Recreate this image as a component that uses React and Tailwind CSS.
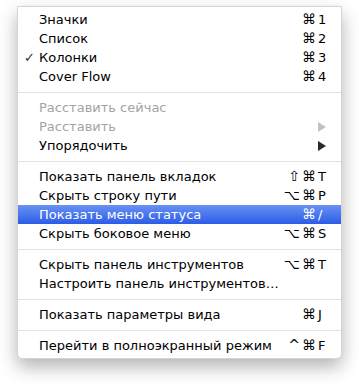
import React from "react";

const font = { fontFamily: '"DejaVu Sans", "Lucida Grande", sans-serif' };

function Shortcut({ mods, k, light }) {
  return (
    <span className={`flex items-center ${light ? "text-white" : "text-black"}`}>
      {mods.split("").map((m, i) => (
        <span key={i} className="text-[14px] mr-[2px]">
          {m}
        </span>
      ))}
      <span className="w-[9px] text-left">{k}</span>
    </span>
  );
}

function Arrow({ disabled }) {
  return (
    <svg width="8" height="10" viewBox="0 0 8 10" className="mr-[1px]">
      <path d="M0 0 L8 5 L0 10 Z" fill={disabled ? "#c2c2c2" : "#2a2a2a"} />
    </svg>
  );
}

function Item({ label, mods, k, checked, disabled, arrow, active }) {
  const base = active
    ? "bg-gradient-to-b from-[#6a90f2] to-[#2b5ce7] text-white"
    : disabled
    ? "text-[#a3a3a3]"
    : "text-black";
  return (
    <div className={`flex items-center h-[19px] pl-[6px] pr-[14px] ${base}`}>
      <span className="w-[15px] text-[13px] font-bold leading-none text-[#333]">{checked ? "✓" : ""}</span>
      <span className="flex-1 whitespace-nowrap">{label}</span>
      {arrow && <Arrow disabled={disabled} />}
      {k && <Shortcut mods={mods} k={k} light={active} />}
    </div>
  );
}

function Sep() {
  return (
    <div className="h-[12px] flex items-center">
      <div className="w-full h-px bg-[#e2e2e2]" />
    </div>
  );
}

export default function App() {
  return (
    <div className="w-[359px] h-[387px] bg-white pl-[17px] pt-[6px]" style={font}>
      <div className="w-[325px] bg-white border border-[#d4d4d4] rounded-b-[5px] shadow-[0_8px_18px_rgba(0,0,0,0.3)] py-[3px] text-[13px] leading-[19px]">
        <Item label="Значки" mods="⌘" k="1" />
        <Item label="Список" mods="⌘" k="2" />
        <Item label="Колонки" mods="⌘" k="3" checked />
        <Item label="Cover Flow" mods="⌘" k="4" />
        <Sep />
        <Item label="Расставить сейчас" disabled />
        <Item label="Расставить" disabled arrow />
        <Item label="Упорядочить" arrow />
        <Sep />
        <Item label="Показать панель вкладок" mods="⇧⌘" k="T" />
        <Item label="Скрыть строку пути" mods="⌥⌘" k="P" />
        <Item label="Показать меню статуса" mods="⌘" k="/" active />
        <Item label="Скрыть боковое меню" mods="⌥⌘" k="S" />
        <Sep />
        <Item label="Скрыть панель инструментов" mods="⌥⌘" k="T" />
        <Item label="Настроить панель инструментов…" />
        <Sep />
        <Item label="Показать параметры вида" mods="⌘" k="J" />
        <Sep />
        <Item label="Перейти в полноэкранный режим" mods="^⌘" k="F" />
      </div>
    </div>
  );
}
